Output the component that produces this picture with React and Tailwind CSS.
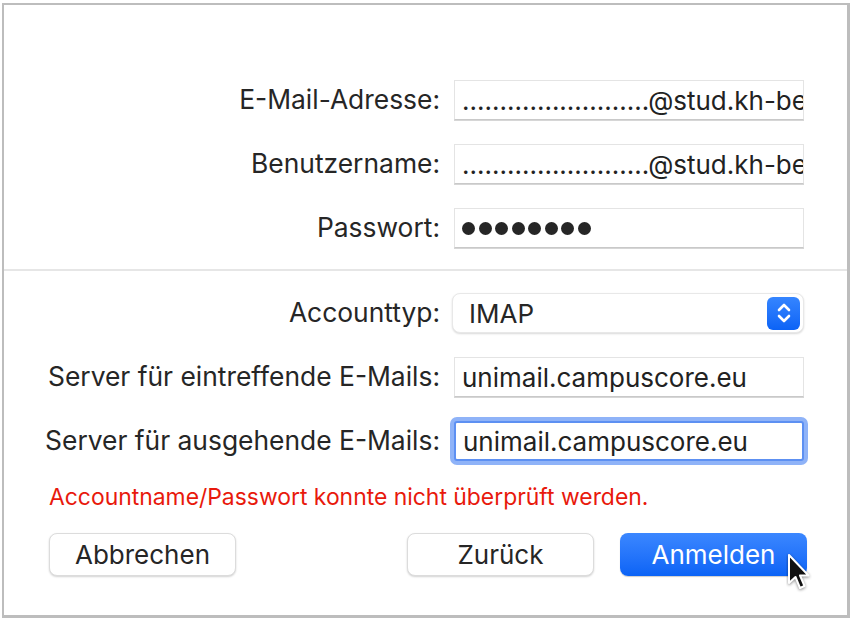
import React from "react";

const font = { fontFamily: "Inter, 'Noto Sans', sans-serif" };

function Field({ children, focused }) {
  return (
    <div
      className={
        "h-[40px] w-[350px] bg-white flex items-center pl-[7px] overflow-hidden whitespace-nowrap text-[26px] text-[#222222] " +
        (focused
          ? "border-[2px] border-[#5d90f2] rounded-[3px] shadow-[0_0_0_4px_#8fb3f8] pl-[6px]"
          : "border border-[#e4e4e4] border-b-[#c9c9c9] shadow-[0_1px_0_#d6d6d6]")
      }
    >
      {children}
    </div>
  );
}

function Label({ children }) {
  return (
    <div className="h-[40px] flex items-center justify-end text-[26.4px] text-[#262626] whitespace-nowrap">
      {children}
    </div>
  );
}

function Button({ children, primary }) {
  return (
    <button
      className={
        "h-[43px] w-[187px] rounded-[8px] text-[26px] flex items-center justify-center " +
        (primary
          ? "bg-gradient-to-b from-[#3b87ff] to-[#0a63f6] text-white shadow-[0_1px_1px_rgba(0,0,0,0.2)]"
          : "bg-white text-[#262626] border border-[#dcdcdc] shadow-[0_1px_2px_rgba(0,0,0,0.18)]")
      }
    >
      {children}
    </button>
  );
}

function Cursor() {
  return (
    <svg className="absolute left-[786px] top-[553px]" width="26" height="40" viewBox="0 0 26 40">
      <path
        d="M3 2 L3 30 L9.5 24 L14 35 L18.5 33 L14 22.5 L22.5 22.5 Z"
        fill="#111"
        stroke="#fff"
        strokeWidth="2"
        strokeLinejoin="round"
        style={{ filter: "drop-shadow(0 1px 1.5px rgba(0,0,0,0.45))" }}
      />
    </svg>
  );
}

export default function App() {
  const dots = ".........................";
  return (
    <div className="w-[852px] h-[620px] bg-white pt-[3px] pl-[2px] relative" style={font}>
      <div className="w-[848px] h-[615px] border-[2px] border-[#bdbdbd] border-r-[3px] border-b-[3px] flex flex-col">
        <div className="grid grid-cols-[436px_350px] gap-x-[14px] gap-y-[24px] pt-[75px]">
          <Label>E-Mail-Adresse:</Label>
          <Field>{dots}@stud.kh-be</Field>
          <Label>Benutzername:</Label>
          <Field>{dots}@stud.kh-be</Field>
          <Label>Passwort:</Label>
          <Field>
            <div className="flex gap-[3.5px]">
              {[0, 1, 2, 3, 4, 5, 6, 7].map((i) => (
                <div key={i} className="w-[13px] h-[13px] rounded-full bg-[#262626]" />
              ))}
            </div>
          </Field>
        </div>

        <div className="h-[2px] bg-[#e6e6e6] mt-[21px]" />

        <div className="grid grid-cols-[436px_350px] gap-x-[14px] gap-y-[24px] pt-[22px]">
          <Label>Accounttyp:</Label>
          <div className="h-[40px] w-[352px] -ml-[2px] rounded-[8px] bg-white border border-[#e8e8e8] shadow-[0_1px_2px_rgba(0,0,0,0.15)] flex items-center justify-between pl-[16px] pr-[3px]">
            <span className="text-[26px] text-[#262626]">IMAP</span>
            <div className="w-[33px] h-[33px] rounded-[6px] bg-gradient-to-b from-[#3585ff] to-[#0b63f6] flex items-center justify-center">
              <svg width="16" height="24" viewBox="0 0 16 24" fill="none" stroke="#fff" strokeWidth="2.6" strokeLinecap="round" strokeLinejoin="round">
                <path d="M3 9 L8 4 L13 9" />
                <path d="M3 15 L8 20 L13 15" />
              </svg>
            </div>
          </div>
          <Label>Server für eintreffende E-Mails:</Label>
          <Field>unimail.campuscore.eu</Field>
          <Label>Server für ausgehende E-Mails:</Label>
          <Field focused>unimail.campuscore.eu</Field>
        </div>

        <div className="mt-[22px] pl-[45px] h-[28px] flex items-center text-[22.9px] text-[#e8190c]">
          Accountname/Passwort konnte nicht überprüft werden.
        </div>

        <div className="mt-[22px] flex pl-[45px] pr-[40px]">
          <Button>Abbrechen</Button>
          <div className="ml-auto flex gap-[26px]">
            <Button>Zurück</Button>
            <Button primary>Anmelden</Button>
          </div>
        </div>
      </div>
      <Cursor />
    </div>
  );
}
